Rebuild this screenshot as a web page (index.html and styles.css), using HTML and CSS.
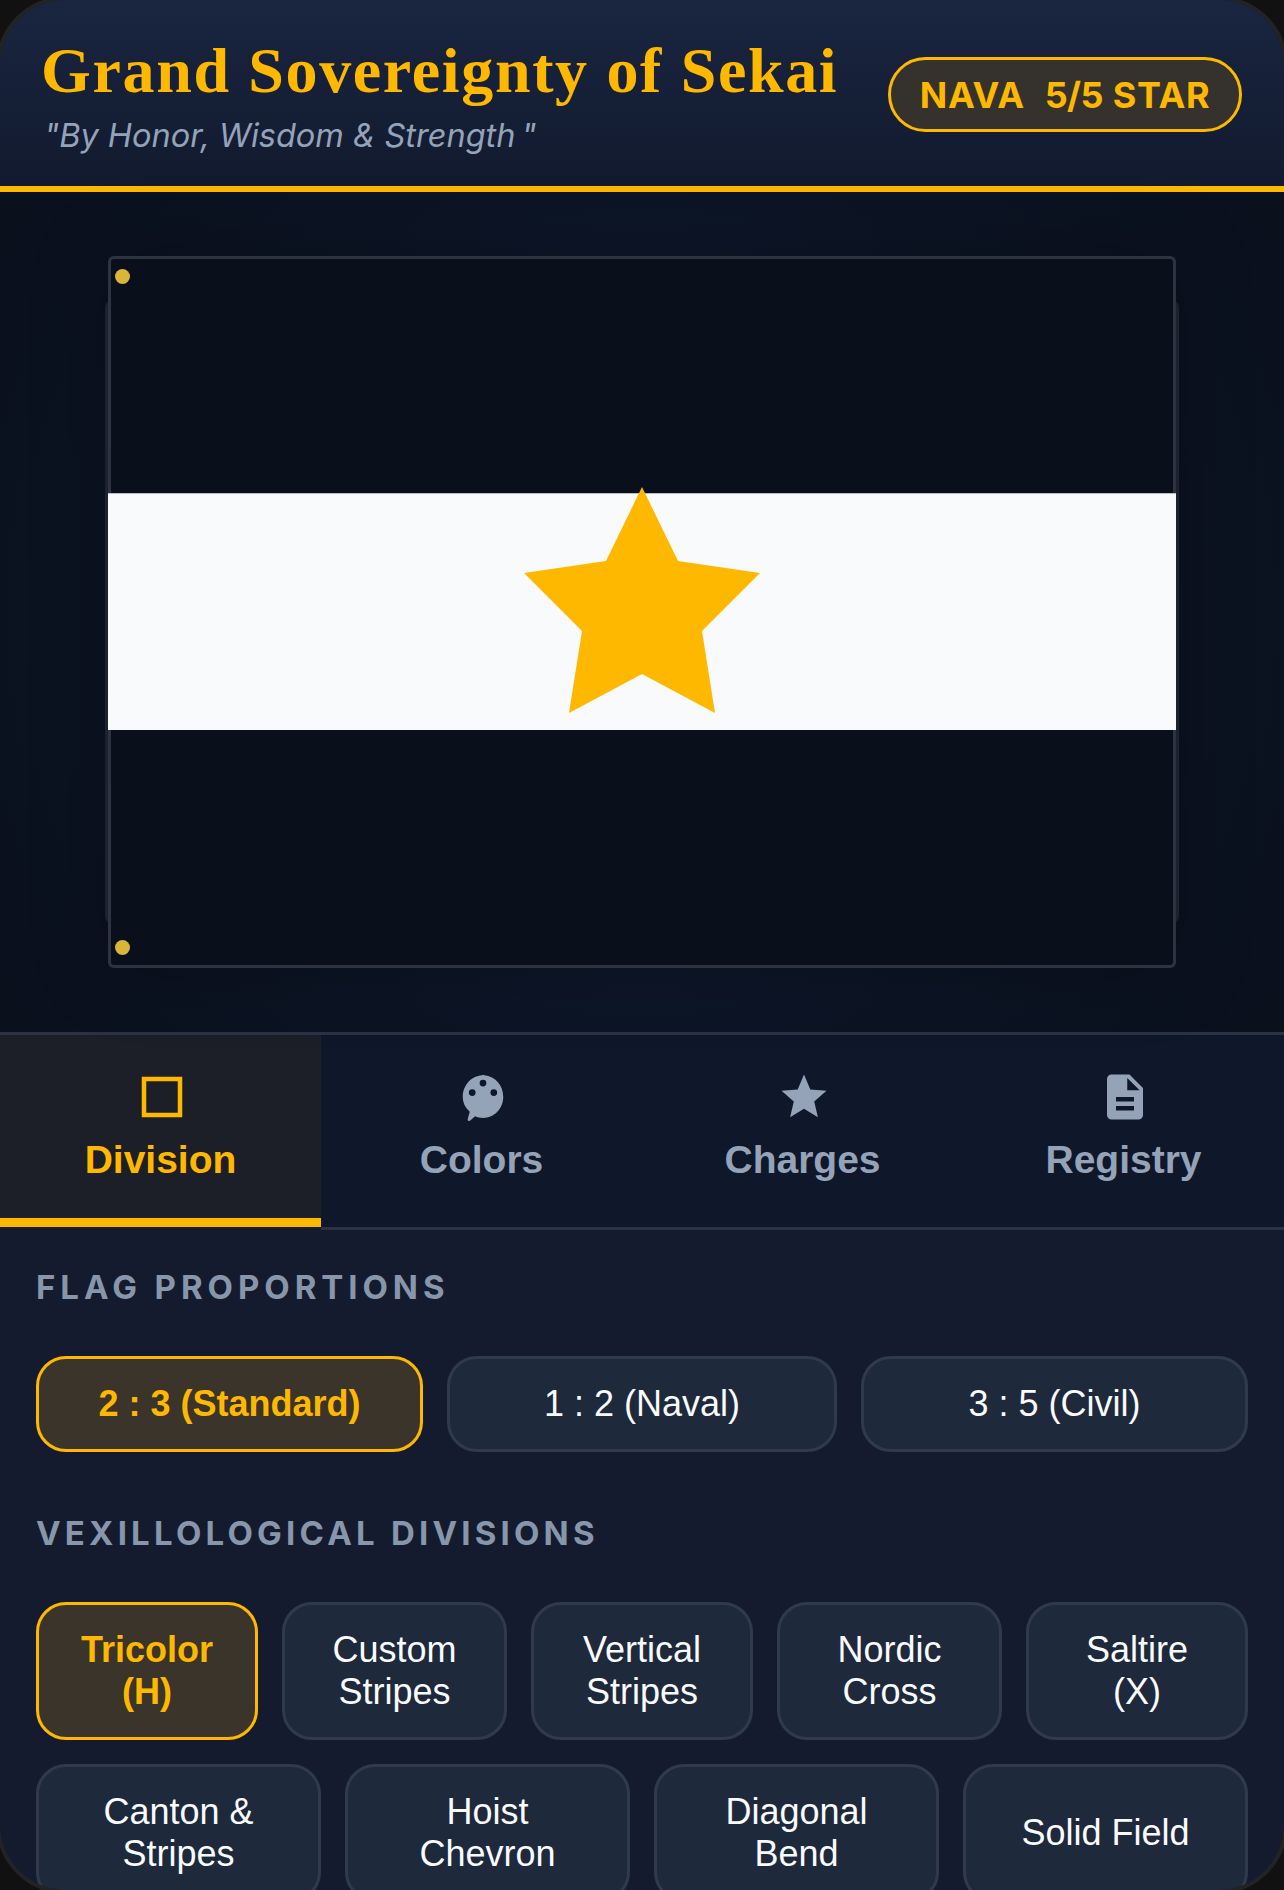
FILE: index.html
```html
<!DOCTYPE html>
<html lang="en">
<head>
  <meta charset="UTF-8" />
  <meta name="viewport" content="width=device-width, initial-scale=1" />
  <title>Grand Sovereignty of Sekai</title>
  <link rel="stylesheet" href="styles.css">
</head>
<body>
  <div class="phone">
    <header class="top">
      <div class="brand">
        <h1>Grand Sovereignty of Sekai</h1>
        <p>"By Honor, Wisdom &amp; Strength&#8201;"</p>
      </div>
      <div class="badge"><span>NAVA</span><span class="score">5/5</span><span>STAR</span></div>
    </header>

    <main class="stage">
      <div class="flag">
        <div class="stripe dark first"></div>
        <div class="stripe light"></div>
        <div class="stripe dark last"></div>
        <i class="hole hole-top"></i>
        <i class="hole hole-bottom"></i>
        <svg class="charge" viewBox="0 0 236 226" aria-hidden="true">
          <polygon points="118,0 154,74 236,86 178,144 191,226 118,187 45,226 58,144 0,86 82,74" />
        </svg>
      </div>
    </main>

    <nav class="tabs">
      <div class="tab active">
        <svg viewBox="0 0 24 24"><path d="M3 3v18h18V3H3zm16 16H5V5h14v14z" /></svg>
        <span>Division</span>
      </div>
      <div class="tab">
        <svg viewBox="0 0 24 24"><path fill-rule="evenodd" d="M12 2.1c.2 0 .4.1.6.2C17.500 2.700 21 6.900 21 11.900c0 5.300-4 9.400-9 9.400-1.300 0-2.500-.2-3.500-.7l-2.300 1.900c-.5.4-1.200 0-1-.6l.9-3.400C4.100 16.800 3 14.500 3 11.900c0-5.100 3.800-9.300 8.600-9.600.1-.1.300-.2.400-.2zM12 4.300a1.500 1.500 0 1 0 0 3 1.500 1.500 0 0 0 0-3zM7.200 8.500a1.500 1.500 0 1 0 0 3 1.500 1.500 0 0 0 0-3zM16.800 8.500a1.500 1.500 0 1 0 0 3 1.500 1.500 0 0 0 0-3z" /></svg>
        <span>Colors</span>
      </div>
      <div class="tab">
        <svg viewBox="0 0 24 24"><path d="M12 17.270L18.180 21l-1.640-7.030L22 9.240l-7.190-.61L12 2 9.190 8.630 2 9.240l5.460 4.730L5.820 21z" /></svg>
        <span>Charges</span>
      </div>
      <div class="tab">
        <svg viewBox="0 0 24 24"><path d="M14 2H6c-1.100 0-2 .9-2 2v16c0 1.100.9 2 2 2h12c1.100 0 2-.9 2-2V8l-6-6zm2 16H8v-2h8v2zm0-4H8v-2h8v2zm-3-5V3.500L18.500 9H13z" /></svg>
        <span>Registry</span>
      </div>
    </nav>

    <section class="panel">
      <h2>FLAG PROPORTIONS</h2>
      <div class="opts three">
        <button class="opt on">2 : 3 (Standard)</button>
        <button class="opt">1 : 2 (Naval)</button>
        <button class="opt">3 : 5 (Civil)</button>
      </div>

      <h2 class="tight">VEXILLOLOGICAL DIVISIONS</h2>
      <div class="opts five">
        <button class="opt on">Tricolor (H)</button>
        <button class="opt">Custom Stripes</button>
        <button class="opt">Vertical Stripes</button>
        <button class="opt">Nordic Cross</button>
        <button class="opt">Saltire (X)</button>
      </div>
      <div class="opts four">
        <button class="opt">Canton &amp; Stripes</button>
        <button class="opt">Hoist Chevron</button>
        <button class="opt">Diagonal Bend</button>
        <button class="opt">Solid Field</button>
      </div>
    </section>
  </div>
</body>
</html>
```

FILE: styles.css
```css
* { box-sizing: border-box; }
html, body { margin: 0; height: 1890px; overflow: hidden; background: #111111; }
body { font-family: "Liberation Sans", Arial, sans-serif; }

.phone {
  width: 1284px; height: 1890px;
  display: flex; flex-direction: column;
  border-radius: 66px; overflow: hidden;
  background: #151b2e;
  box-shadow: 0 0 0 4px #222325;
}

.top {
  height: 192px; flex: none;
  display: flex; align-items: flex-start; justify-content: space-between;
  padding: 35px 42px 0 41px;
  background: linear-gradient(180deg, #1a2540 0%, #111a2e 100%);
  border-bottom: 6px solid #ffb800;
}
.brand { flex: none; }
.brand h1 {
  margin: 0;
  font: bold 64px/72px "Liberation Serif", serif;
  letter-spacing: 1.65px;
  white-space: nowrap;
  color: #ffb800;
}
.brand p {
  margin: 9px 0 0 3px;
  font: italic 32.5px/40px Inter, sans-serif;
  color: #94a3b8;
}
.badge {
  width: 354px; height: 75px; flex: none;
  display: flex; align-items: center; justify-content: center; gap: 20px;
  margin-top: 22px;
  font: bold 36px Inter, sans-serif;
  letter-spacing: 0.6px;
  color: #ffb800;
  background: #35322e;
  border: 3px solid #ffb800;
  border-radius: 38px;
}
.badge .score { letter-spacing: -0.6px; margin-right: -10px; }

.stage {
  height: 840px; flex: none;
  display: flex; align-items: center; justify-content: center;
  background: radial-gradient(circle at center, #12203a 0%, #0c1424 60%, #0a101c 100%);
}
.flag {
  width: 1068px; height: 712px;
  position: relative; isolation: isolate;
  display: flex; flex-direction: column;
  box-shadow: 0 0 70px rgba(0, 0, 0, 0.25);
}
.flag::before {
  content: ""; position: absolute; z-index: -1;
  left: -3px; right: -3px; top: 44px; bottom: 44px;
  background: #1c2230; border-radius: 8px;
}
.stripe { flex: 1; }
.stripe.dark { background: #0a0f1c; border: 3px solid #2e3342; }
.stripe.first { border-bottom: none; border-radius: 6px 6px 0 0; }
.stripe.last { border-top: none; border-radius: 0 0 6px 6px; }
.stripe.light {
  margin: -1px 0;
  background: #f8fafc;
  border-top: 1px solid #b8bcc4; border-bottom: 1px solid #b8bcc4;
}

.hole {
  position: absolute; left: 7px;
  width: 15px; height: 15px;
  border-radius: 50%; background: #d9b538;
}
.hole-top { top: 13px; }
.hole-bottom { bottom: 13px; }
.charge {
  position: absolute; left: 416px; top: 231px;
  width: 236px; height: 226px;
  fill: #ffb800;
}

.tabs {
  height: 198px; flex: none;
  display: grid; grid-template-columns: repeat(4, 1fr);
  background: #0f172a;
  border-top: 3px solid #2a3243;
  border-bottom: 3px solid #2a3243;
}
.tab {
  display: flex; flex-direction: column; align-items: center;
  padding-top: 35px;
  font-size: 39px; font-weight: bold;
  color: #94a3b8;
}
.tab svg { width: 54px; height: 54px; fill: currentColor; margin: 0 0 0 3px; }
.tab span { margin-top: 14px; }
.tab.active {
  color: #ffb800;
  background: #1c1f28;
  border-bottom: 9px solid #ffb800;
  box-shadow: 0 3px 0 #151b2e;
}

.panel { padding: 37px 36px 0; }
.panel h2 {
  margin: 0 0 49px;
  font: bold 33px/40px Inter, sans-serif;
  letter-spacing: 4.95px;
  color: #8896ac;
}
.panel h2.tight { letter-spacing: 4.2px; }
.opts { display: grid; gap: 24px; margin-bottom: 24px; }
.opts.three { grid-template-columns: 387fr 390fr 387fr; margin-bottom: 61px; }
.opts.five { grid-template-columns: 222fr 225fr 222fr 225fr 222fr; }
.opts.four { grid-template-columns: repeat(4, 1fr); }
.opt {
  padding: 24px 30px;
  font: 36px "Liberation Sans", Arial, sans-serif;
  color: #f8fafc;
  background: #1e293b;
  border: 3px solid #2f3b4d;
  border-radius: 30px;
}
.opt.on {
  font-weight: bold;
  color: #ffb800;
  background: #3a342a;
  border-color: #ffb800;
}
```
